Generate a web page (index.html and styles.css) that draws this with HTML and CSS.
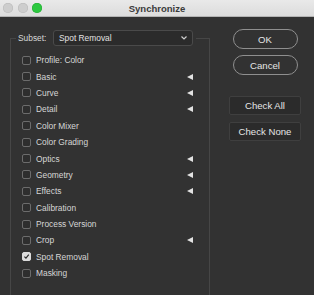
FILE: index.html
```
<!DOCTYPE html>
<html lang="en">
<head>
    <meta charset="UTF-8">
    <meta name="viewport" content="width=device-width, initial-scale=1.0">
    <title>Synchronize</title>
    <link rel="stylesheet" href="styles.css">
</head>
<body>
    <div class="window">
        <div class="titlebar">
            <div class="lights">
                <span class="light"></span>
                <span class="light"></span>
                <span class="light light-green"></span>
            </div>
            <div class="title">Synchronize</div>
            <div></div>
        </div>

        <div class="content">
            <fieldset class="group">
                <legend class="subset">
                    <span class="subset-label">Subset:</span>
                    <span class="popup">
                        <span>Spot Removal</span>
                        <svg class="chevron" width="6" height="4" viewBox="0 0 6 4"><path d="M0.5 0.5 L3 3 L5.5 0.5" fill="none" stroke="#cfcfcf" stroke-width="1.2"/></svg>
                    </span>
                </legend>

                <div class="rows">
                    <div class="row"><span class="box"></span>Profile: Color</div>
                    <div class="row"><span class="box"></span>Basic<span class="arrow"></span></div>
                    <div class="row"><span class="box"></span>Curve<span class="arrow"></span></div>
                    <div class="row"><span class="box"></span>Detail<span class="arrow"></span></div>
                    <div class="row"><span class="box"></span>Color Mixer</div>
                    <div class="row"><span class="box"></span>Color Grading</div>
                    <div class="row"><span class="box"></span>Optics<span class="arrow"></span></div>
                    <div class="row"><span class="box"></span>Geometry<span class="arrow"></span></div>
                    <div class="row"><span class="box"></span>Effects<span class="arrow"></span></div>
                    <div class="row"><span class="box"></span>Calibration</div>
                    <div class="row"><span class="box"></span>Process Version</div>
                    <div class="row"><span class="box"></span>Crop<span class="arrow"></span></div>
                    <div class="row">
                        <span class="box box-checked">
                            <svg width="9" height="9" viewBox="0 0 9 9"><path d="M1.8 4.6 L3.8 6.6 L7.4 2" fill="none" stroke="#2a2a2a" stroke-width="1.5"/></svg>
                        </span>Spot Removal
                    </div>
                    <div class="row"><span class="box"></span>Masking</div>
                </div>
            </fieldset>

            <div class="actions">
                <button class="btn btn-pill btn-ok">OK</button>
                <button class="btn btn-pill btn-cancel">Cancel</button>
                <button class="btn btn-flat btn-all">Check All</button>
                <button class="btn btn-flat btn-none">Check None</button>
            </div>
        </div>
    </div>
</body>
</html>
```

FILE: styles.css
```
body {
    margin: 0;
    background: #323232;
    font-family: 'Liberation Sans', Arial, sans-serif;
    overflow: hidden;
}
.window {
    width: 314px;
    height: 295px;
    overflow: hidden;
}
.titlebar {
    height: 17px;
    display: grid;
    grid-template-columns: 1fr auto 1fr;
    align-items: center;
    background: linear-gradient(#e9e9e9, #dcdcdc);
    border-bottom: 1px solid #b4b4b4;
    box-sizing: border-box;
}
.lights {
    display: flex;
    gap: 4.5px;
    padding-left: 3px;
}
.light {
    width: 10px;
    height: 10px;
    border-radius: 50%;
    background: #cdcdcd;
    box-shadow: inset 0 0 0 0.5px #b8b8b8;
}
.light-green {
    background: #2cc83f;
    box-shadow: inset 0 0 0 0.5px #22a832;
}
.title {
    font-size: 9.5px;
    font-weight: bold;
    color: #3b3b3b;
}
.content {
    display: flex;
    align-items: flex-start;
    padding: 12px 0 0 10px;
}
.group {
    margin: 1px 0 0 0;
    padding: 0 0 40px 0;
    width: 200px;
    box-sizing: border-box;
    border: 1px solid #464646;
    min-width: 0;
}
.subset {
    display: flex;
    align-items: center;
    margin-left: 5px;
    padding: 0 3px 0 2px;
    font-size: 8.4px;
    color: #d8d8d8;
}
.subset-label {
    width: 35px;
}
.popup {
    width: 140px;
    height: 16px;
    box-sizing: border-box;
    display: flex;
    align-items: center;
    justify-content: space-between;
    padding: 0 5px 0 5px;
    background: #2b2b2b;
    border: 1px solid #4a4a4a;
    border-radius: 3px;
    color: #e2e2e2;
}
.chevron {
    display: block;
}
.rows {
    padding: 6px 16px 0 11px;
}
.row {
    display: flex;
    align-items: center;
    height: 16.4px;
    font-size: 8.4px;
    color: #d6d6d6;
}
.box {
    width: 9px;
    height: 9px;
    box-sizing: border-box;
    border: 1px solid #6c6c6c;
    border-radius: 2px;
    background: #2e2e2e;
    margin-right: 5px;
    display: flex;
    align-items: center;
    justify-content: center;
}
.box-checked {
    background: #dcdcdc;
    border-color: #dcdcdc;
}
.box-checked svg {
    display: block;
}
.arrow {
    margin-left: auto;
    width: 0;
    height: 0;
    border-top: 3.5px solid transparent;
    border-bottom: 3.5px solid transparent;
    border-right: 6px solid #e2e2e2;
}
.actions {
    display: flex;
    flex-direction: column;
    align-items: center;
    width: 72px;
    margin-left: 19px;
}
.btn {
    font-family: 'Liberation Sans', Arial, sans-serif;
    font-size: 9.6px;
    color: #e6e6e6;
    padding: 0;
    box-sizing: border-box;
}
.btn-pill {
    width: 65px;
    height: 20px;
    background: #323232;
    border: 1px solid #8f8f8f;
    border-radius: 10px;
}
.btn-cancel {
    margin-top: 6px;
}
.btn-flat {
    width: 72px;
    height: 19px;
    background: #2b2b2b;
    border: 1px solid #3f3f3f;
    border-radius: 2px;
}
.btn-all {
    margin-top: 21px;
}
.btn-none {
    margin-top: 7px;
}
```
